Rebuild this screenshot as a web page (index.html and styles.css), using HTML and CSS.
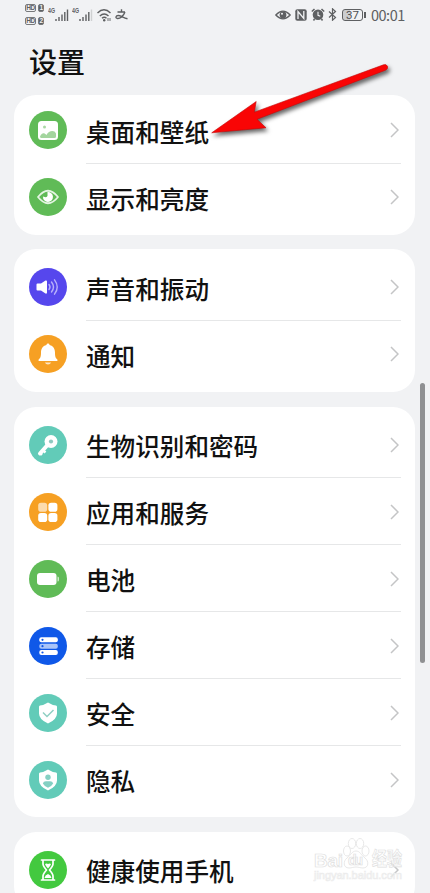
FILE: index.html
```html
<!DOCTYPE html>
<html lang="zh-CN">
<head>
  <meta charset="UTF-8">
  <meta name="viewport" content="width=device-width, initial-scale=1">
  <title>设置</title>
  <link rel="stylesheet" href="styles.css">
</head>
<body>
  <header class="status-bar">
    <div class="status-left">
      <div class="hd-group">
        <div class="hd"><span>HD</span><span class="sim">1</span></div>
        <div class="hd"><span>HD</span><span class="sim">2</span></div>
      </div>
      <svg class="signal" width="21" height="14" viewBox="0 0 21 14">
        <text x="0" y="5.2" textLength="7" lengthAdjust="spacingAndGlyphs">4G</text>
        <path d="M8 13v-2M11 13V9M14 13V6.500M16.800 13V4M19.500 13V1.500"/>
      </svg>
      <svg class="signal second" width="21" height="14" viewBox="0 0 21 14">
        <text x="0" y="5.200" textLength="7" lengthAdjust="spacingAndGlyphs">4G</text>
        <path d="M8 13v-2M11 13V9M14 13V6.500M16.800 13V4"/>
        <path class="weak" d="M19.500 13V1.500"/>
      </svg>
      <svg class="wifi" width="15" height="14" viewBox="0 0 15 14">
        <path d="M.5 5Q7-1.500 13.500 5M2.800 8Q7.200 3.800 11.500 8M5 10.300Q7.300 8.200 9.500 10.300"/>
        <circle cx="7.200" cy="12.300" r="1.200"/>
        <path class="thin" d="M11 13v-3M13 10v3"/>
      </svg>
      <svg class="pay" width="13" height="11" viewBox="0 0 13 11">
        <path d="M2.500 3h7.500M6.500.3V3M10 3C8.500 7 5 9.800 2.500 9.500S.8 6.500 3.200 6.500s5 2.200 9.300 3.200"/>
      </svg>
    </div>
    <div class="status-right">
      <svg width="16" height="12" viewBox="0 0 16 12">
        <path d="M.8 6Q8-1.800 15.200 6Q8 13.800.8 6Z" fill="none" stroke="#5e6062" stroke-width="1.300"/>
        <circle cx="8" cy="6" r="3.400" fill="#5e6062"/>
        <circle cx="7" cy="4.800" r="1" fill="#f1f2f4"/>
      </svg>
      <svg class="nfc" width="12" height="12" viewBox="0 0 12 12">
        <rect x=".3" y=".3" width="11.400" height="11.400" rx="2" fill="#5e6062"/>
        <path d="M3 10V2.500L8.800 9.500V2" fill="none" stroke="#f1f2f4" stroke-width="1.300"/>
      </svg>
      <svg class="alarm" width="14" height="13" viewBox="0 0 14 13">
        <circle cx="7" cy="6.800" r="5.300" fill="#5e6062"/>
        <path d="M.8 3.500L3.500 1M13.200 3.500L10.500 1M3.500 11L2.500 12.500M10.500 11l1 1.500" stroke="#5e6062" stroke-width="1.500"/>
        <path d="M7 3.800v3.500l2.300 1" fill="none" stroke="#f1f2f4" stroke-width="1.100"/>
      </svg>
      <svg class="bluetooth" width="9" height="13" viewBox="0 0 9 13">
        <path d="M1 3.500l6.500 6L4.500 12.200V.8L7.500 3.500 1 9.500" fill="none" stroke="#5e6062" stroke-width="1.200"/>
      </svg>
      <div class="battery"><span>37</span></div>
      <span class="clock">00:01</span>
    </div>
  </header>

  <h1>设置</h1>

  <main>
    <section class="card first">
      <div class="row">
        <svg class="icon" viewBox="0 0 38 38">
          <circle cx="19" cy="19" r="19" fill="#60bb57"/>
          <rect x="9" y="10" width="20" height="19" rx="3.500" fill="#fff"/>
          <circle cx="15.500" cy="16" r="1.500" fill="#a9d9a4"/>
          <path d="M11 25.500c2-4 4-4 6.500-1.500 2-4.500 8-5.500 9.500-1.500v3q0 1.500-1.500 1.500h-13Q11 27 11 25.500Z" fill="#a3d59e"/>
        </svg>
        <span class="label">桌面和壁纸</span>
        <svg class="chevron" viewBox="0 0 9 16"><path d="M1 1l7 7-7 7"/></svg>
      </div>
      <div class="row">
        <svg class="icon" viewBox="0 0 38 38">
          <circle cx="19" cy="19" r="19" fill="#60bb57"/>
          <path d="M9 19Q19 6.500 29 19Q19 31.500 9 19Z" fill="none" stroke="#e4f4e2" stroke-width="1.800" stroke-linejoin="round"/>
          <path d="M18.500 14a5 5 0 1 1-4.500 4.500l2.500.8q2.500-.5 2-3Z" fill="#fff"/>
        </svg>
        <span class="label">显示和亮度</span>
        <svg class="chevron" viewBox="0 0 9 16"><path d="M1 1l7 7-7 7"/></svg>
      </div>
    </section>

    <section class="card">
      <div class="row">
        <svg class="icon" viewBox="0 0 38 38">
          <circle cx="19" cy="19" r="19" fill="#5647ed"/>
          <path d="M8.500 15.500h3.500l4.500-3q1.500-.5 1.500 1v11q0 1.500-1.500 1L12 22.500H8.500q-1 0-1-1v-5q0-1 1-1Z" fill="#fff"/>
          <path d="M20 16.500q2 2.500 0 5M22.500 14q4 5 0 10M25.500 11.800q5.500 7.200 0 14.400" fill="none" stroke="#b9b2fa" stroke-width="1.400" stroke-linecap="round"/>
        </svg>
        <span class="label">声音和振动</span>
        <svg class="chevron" viewBox="0 0 9 16"><path d="M1 1l7 7-7 7"/></svg>
      </div>
      <div class="row">
        <svg class="icon" viewBox="0 0 38 38">
          <circle cx="19" cy="19" r="19" fill="#f6a023"/>
          <path d="M19 8.500q1.300 0 1.600 1.400c3.900 1 5.400 4 5.400 7.600 0 4 .5 5.500 2.400 7v1.500H9.600v-1.500c1.900-1.500 2.400-3 2.400-7 0-3.600 1.500-6.600 5.400-7.600Q17.700 8.500 19 8.500Z" fill="#fff"/>
          <path d="M15.800 27.500h6.400q-1 2-3.200 2t-3.200-2Z" fill="#fde5c4"/>
        </svg>
        <span class="label">通知</span>
        <svg class="chevron" viewBox="0 0 9 16"><path d="M1 1l7 7-7 7"/></svg>
      </div>
    </section>

    <section class="card">
      <div class="row">
        <svg class="icon" viewBox="0 0 38 38">
          <circle cx="19" cy="19" r="19" fill="#62cbb8"/>
          <circle cx="22" cy="15.500" r="6.500" fill="#fff"/>
          <path d="M18.500 19L11 27.500" stroke="#fff" stroke-width="4" stroke-linecap="round"/>
          <path d="M13 23.500l3.500 3M10.500 26.500l2.500 2.300" stroke="#fff" stroke-width="2.500"/>
          <circle cx="22" cy="15.500" r="2.100" fill="#8fc9c0"/>
        </svg>
        <span class="label">生物识别和密码</span>
        <svg class="chevron" viewBox="0 0 9 16"><path d="M1 1l7 7-7 7"/></svg>
      </div>
      <div class="row">
        <svg class="icon" viewBox="0 0 38 38">
          <circle cx="19" cy="19" r="19" fill="#f6a023"/>
          <rect x="9.200" y="9.800" width="9" height="9" rx="2.800" fill="#fcdcae"/>
          <rect x="19.400" y="9.800" width="9" height="9" rx="2.800" fill="#fff"/>
          <rect x="9.200" y="20" width="9" height="9" rx="2.800" fill="#fff"/>
          <rect x="19.400" y="20" width="9" height="9" rx="2.800" fill="#fff"/>
        </svg>
        <span class="label">应用和服务</span>
        <svg class="chevron" viewBox="0 0 9 16"><path d="M1 1l7 7-7 7"/></svg>
      </div>
      <div class="row">
        <svg class="icon" viewBox="0 0 38 38">
          <circle cx="19" cy="19" r="19" fill="#60bb57"/>
          <rect x="8" y="13" width="19.500" height="12" rx="3" fill="#fff"/>
          <path d="M28.500 16.500q1.500 0 1.500 1.500v2q0 1.500-1.500 1.500Z" fill="#cdeac9"/>
        </svg>
        <span class="label">电池</span>
        <svg class="chevron" viewBox="0 0 9 16"><path d="M1 1l7 7-7 7"/></svg>
      </div>
      <div class="row">
        <svg class="icon" viewBox="0 0 38 38">
          <circle cx="19" cy="19" r="19" fill="#0f58e8"/>
          <rect x="10.300" y="10.300" width="18.500" height="5" rx="2" fill="#fff"/>
          <rect x="10.300" y="16.700" width="18.500" height="5" rx="2" fill="#a9c4f8"/>
          <rect x="10.300" y="23" width="18.500" height="5" rx="2" fill="#fff"/>
          <g fill="#0f58e8">
            <circle cx="13.500" cy="12.800" r="1.100"/>
            <circle cx="13.500" cy="19.200" r="1.100"/>
            <circle cx="13.500" cy="25.500" r="1.100"/>
          </g>
        </svg>
        <span class="label">存储</span>
        <svg class="chevron" viewBox="0 0 9 16"><path d="M1 1l7 7-7 7"/></svg>
      </div>
      <div class="row">
        <svg class="icon" viewBox="0 0 38 38">
          <circle cx="19" cy="19" r="19" fill="#62cbb8"/>
          <path d="M19 8.500q4 2.600 8 3 1 .2 1 1.200v6.800q0 6-9 10-9-4-9-10v-6.800q0-1 1-1.200 4-.4 8-3Z" fill="#fff"/>
          <path d="M14 18.500l4 4 6.500-6.500" fill="none" stroke="#8fcfc3" stroke-width="1.500"/>
        </svg>
        <span class="label">安全</span>
        <svg class="chevron" viewBox="0 0 9 16"><path d="M1 1l7 7-7 7"/></svg>
      </div>
      <div class="row">
        <svg class="icon" viewBox="0 0 38 38">
          <circle cx="19" cy="19" r="19" fill="#62cbb8"/>
          <path d="M19 8.500q4 2.600 8 3 1 .2 1 1.200v6.800q0 6-9 10-9-4-9-10v-6.800q0-1 1-1.200 4-.4 8-3Z" fill="#fff"/>
          <circle cx="19" cy="16.300" r="2.700" fill="#84d0c3"/>
          <path d="M13.800 22.500q.7-2.300 3-2.300h4.400q2.300 0 3 2.300-1.800 3-5.200 4.300-3.400-1.300-5.200-4.300Z" fill="#84d0c3"/>
        </svg>
        <span class="label">隐私</span>
        <svg class="chevron" viewBox="0 0 9 16"><path d="M1 1l7 7-7 7"/></svg>
      </div>
    </section>

    <section class="card">
      <div class="row">
        <svg class="icon" viewBox="0 0 38 38">
          <circle cx="19" cy="19" r="19" fill="#43c93f"/>
          <g fill="none" stroke="#fff" stroke-width="1.700" stroke-linejoin="round" stroke-linecap="round">
            <path d="M12.500 9h13M12.500 29h13M14 9v4q0 2 3.500 6-3.500 4-3.500 6v4M24 9v4q0 2-3.500 6 3.500 4 3.500 6v4"/>
          </g>
          <path d="M16 13q1.500-1 3 0 1.500-1 3 0-.8 2.500-3 4.500-2.200-2-3-4.500ZM15.500 27q.5-3 3.500-4 3 1 3.500 4Z" fill="#fff"/>
        </svg>
        <span class="label">健康使用手机</span>
        <svg class="chevron" viewBox="0 0 9 16"><path d="M1 1l7 7-7 7"/></svg>
      </div>
    </section>
  </main>

  <div class="scrollbar"></div>

  <svg class="arrow" width="200" height="90" viewBox="200 55 200 90">
    <path d="M211.700 132.800L256.200 101.500 254.300 112.200 383.500 64.800Q386.500 63.800 387.500 66.300 388.300 69 385.500 70.200L257 119.300 266 127.800Z"/>
  </svg>

  <svg class="watermark" width="96" height="52" viewBox="0 0 96 52">
    <g class="paw">
      <ellipse cx="34" cy="17" rx="3.500" ry="5"/>
      <ellipse cx="39" cy="9.500" rx="3.700" ry="5"/>
      <ellipse cx="47" cy="9.500" rx="3.700" ry="5"/>
      <ellipse cx="52.500" cy="17" rx="3.500" ry="5"/>
      <path d="M43 17c4 0 5 4 9 7s4 10-2 10c-3 0-4-1-7-1s-4 1-7 1c-6 0-6-7-2-10s5-7 9-7Z"/>
    </g>
    <text class="brand" x="1" y="33" textLength="29">Bai</text>
    <text class="du" x="35" y="31" textLength="15">du</text>
    <text class="brand" x="59" y="32" textLength="30" lengthAdjust="spacingAndGlyphs">经验</text>
    <text class="site" x="1" y="45" textLength="88">jingyan.baidu.com</text>
  </svg>
</body>
</html>
```
FILE: styles.css
```css
body {
  position: relative;
  margin: 0;
  height: 893px;
  overflow: hidden;
  background-color: #f1f2f4;
  color: #111;
  font-family: "Noto Sans CJK SC", "Noto Sans", sans-serif;
}

svg {
  display: block;
  flex-shrink: 0;
}

.status-bar {
  display: flex;
  justify-content: space-between;
  align-items: center;
  box-sizing: border-box;
  height: 29px;
  padding: 0 26px 0 25px;
}

.status-left,
.status-right {
  display: flex;
  align-items: center;
}

.hd-group {
  display: flex;
  flex-direction: column;
  gap: 5px;
}

.hd {
  display: flex;
  gap: 2px;
  color: #5e6062;
}

.hd span {
  width: 11px;
  height: 8px;
  border: 1px solid #77797b;
  border-radius: 2px;
  box-sizing: border-box;
  font: bold 6.5px/6px "Liberation Sans", sans-serif;
  letter-spacing: -0.5px;
  text-align: center;
}

.hd .sim {
  width: 6px;
  color: #f1f2f4;
  background-color: #5e6062;
}

.signal {
  margin-left: 4px;
}

.signal.second {
  margin-left: 3px;
}

.signal text {
  font: bold 7px "Liberation Sans", sans-serif;
  fill: #5e6062;
}

.signal path {
  stroke: #5e6062;
  stroke-width: 1.4;
}

.signal .weak {
  stroke: #cfd1d2;
}

.wifi {
  margin-left: 4px;
}

.wifi path,
.pay path {
  fill: none;
  stroke: #5e6062;
  stroke-width: 1.4;
}

.wifi circle {
  fill: #5e6062;
}

.wifi .thin {
  stroke-width: 0.9;
}

.pay {
  margin-left: 3px;
}

.nfc {
  margin-left: 4px;
}

.alarm {
  margin-left: 4px;
}

.bluetooth {
  margin-left: 3px;
}

.battery {
  position: relative;
  width: 21px;
  height: 12px;
  margin: 0 8px 0 5px;
  box-sizing: border-box;
  border: 1px solid #5e6062;
  border-radius: 3px;
  background: linear-gradient(to right, #cbcdcf 37%, transparent 37%);
  font: 11.5px/10px Roboto, sans-serif;
  text-align: center;
  color: #4e5052;
}

.battery::after {
  content: "";
  position: absolute;
  right: -4px;
  top: 2px;
  width: 2px;
  height: 6px;
  background-color: #5e6062;
}

.clock {
  font: 14.5px/28px "Noto Sans CJK SC", sans-serif;
  letter-spacing: -0.5px;
  width: 33px;
  white-space: nowrap;
  color: #5e6062;
}

h1 {
  margin: 0 0 0 29px;
  height: 66px;
  font-size: 28px;
  font-weight: 500;
  line-height: 64px;
}

main {
  display: flex;
  flex-direction: column;
  gap: 14.5px;
  padding: 0 15px 0 14px;
}

.card {
  padding: 4.5px 14px 4.3px 15px;
  border-radius: 22px;
  background-color: #fff;
}

.card.first {
  padding-top: 1.5px;
}

.row {
  position: relative;
  display: flex;
  align-items: center;
  height: 67px;
}

.row + .row::before {
  content: "";
  position: absolute;
  top: -1px;
  left: 57px;
  right: 0;
  height: 1px;
  background-color: #e6e7e8;
}

.icon {
  width: 38px;
  height: 38px;
}

.label {
  flex: 1;
  margin-left: 19px;
  padding-top: 1px;
  font-size: 24.6px;
  font-weight: 500;
  line-height: 36px;
}

.chevron {
  width: 9px;
  height: 16px;
  margin-right: 2px;
}

.chevron path {
  fill: none;
  stroke: #c4c5c6;
  stroke-width: 1.5;
}

.scrollbar {
  position: absolute;
  left: 420px;
  top: 383px;
  width: 5px;
  height: 280px;
  border-radius: 3px;
  background-color: #8f9092;
}

.arrow {
  position: absolute;
  left: 200px;
  top: 55px;
  filter: drop-shadow(2px 3px 2px rgba(0, 0, 0, 0.6));
}

.arrow path {
  fill: #f90505;
  stroke: #c40808;
  stroke-width: 0.6;
}

.watermark {
  position: absolute;
  left: 313px;
  top: 834px;
  font-family: "Liberation Sans", "Noto Sans CJK SC", sans-serif;
  fill: rgba(255, 255, 255, 0.6);
  stroke: #dedede;
  stroke-width: 0.7;
}

.watermark .brand {
  font-size: 19px;
  font-weight: bold;
}

.watermark .du {
  font-size: 14px;
  font-weight: bold;
}

.watermark .site {
  font-size: 11px;
  stroke: #ececec;
}
```
